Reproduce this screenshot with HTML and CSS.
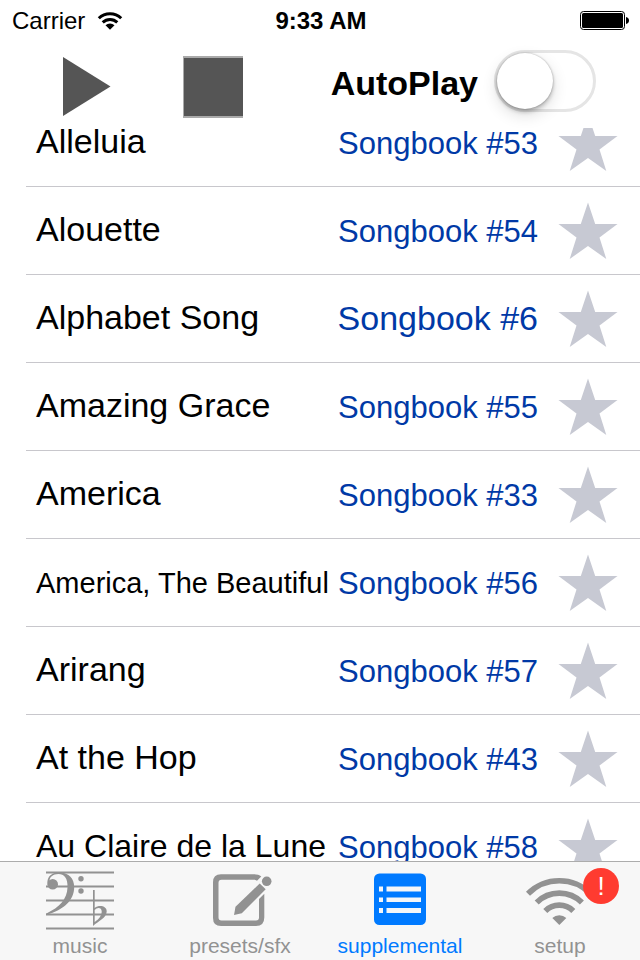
FILE: index.html
```html
<!DOCTYPE html>
<html lang="en">
<head>
<meta charset="utf-8">
<meta name="viewport" content="width=device-width, initial-scale=1">
<title>Supplemental songs</title>
<link rel="stylesheet" href="styles.css">
</head>
<body>
<svg class="defs" aria-hidden="true"><symbol id="star" viewBox="0 0 60 58"><path d="M30 0.500 37.200 22H59.500L41.500 35.500 48.300 57 30 44 11.700 57 18.500 35.500 0.500 22H22.800Z"/></symbol></svg>
<div class="status">
  <div class="carrier"><span>Carrier</span>
    <svg class="signal" viewBox="0 0 26 20" aria-hidden="true"><g fill="none" stroke="#000" stroke-width="3"><path d="M1.800 7.200a16 16 0 0 1 22.400 0"/><path d="M5.700 11.400a10.500 10.500 0 0 1 14.600 0"/></g><path d="M8.500 14.200a6.500 6.500 0 0 1 9 0L13 18.800Z"/></svg>
  </div>
  <time class="clock">9:33 AM</time>
  <svg class="battery" viewBox="0 0 50 20" aria-hidden="true"><rect x="0.500" y="0.500" width="44" height="18" rx="3" fill="none" stroke="#000"/><rect x="2" y="2" width="41" height="15" rx="1.500"/><path d="M46 6c4 .5 4 6.500 0 7Z"/></svg>
</div>
<header class="toolbar">
  <button class="player" type="button" aria-label="Play"><svg viewBox="0 0 60 62"><path d="M0 1 47.500 30.500 0 60Z"/></svg></button>
  <button class="player" type="button" aria-label="Stop"><svg viewBox="0 0 60 62"><path d="M0 0H60V62H0Z" fill="#aaa"/><path d="M1 2H60V60H1Z"/></svg></button>
  <div class="option">
    <label class="autoplay" for="autoplay">AutoPlay</label>
    <input class="switch" id="autoplay" type="checkbox" role="switch">
  </div>
</header>
<main class="list">
  <ul class="songs">
    <li class="song"><span class="title">Alleluia</span><span class="book">Songbook #53</span><button class="star" type="button" aria-label="Favorite"><svg><use href="#star"/></svg></button></li>
    <li class="song"><span class="title">Alouette</span><span class="book">Songbook #54</span><button class="star" type="button" aria-label="Favorite"><svg><use href="#star"/></svg></button></li>
    <li class="song"><span class="title">Alphabet Song</span><span class="book book-large">Songbook #6</span><button class="star" type="button" aria-label="Favorite"><svg><use href="#star"/></svg></button></li>
    <li class="song"><span class="title">Amazing Grace</span><span class="book">Songbook #55</span><button class="star" type="button" aria-label="Favorite"><svg><use href="#star"/></svg></button></li>
    <li class="song"><span class="title">America</span><span class="book">Songbook #33</span><button class="star" type="button" aria-label="Favorite"><svg><use href="#star"/></svg></button></li>
    <li class="song"><span class="title title-small">America, The Beautiful</span><span class="book">Songbook #56</span><button class="star" type="button" aria-label="Favorite"><svg><use href="#star"/></svg></button></li>
    <li class="song"><span class="title">Arirang</span><span class="book">Songbook #57</span><button class="star" type="button" aria-label="Favorite"><svg><use href="#star"/></svg></button></li>
    <li class="song"><span class="title">At the Hop</span><span class="book">Songbook #43</span><button class="star" type="button" aria-label="Favorite"><svg><use href="#star"/></svg></button></li>
    <li class="song"><span class="title title-medium">Au Claire de la Lune</span><span class="book">Songbook #58</span><button class="star" type="button" aria-label="Favorite"><svg><use href="#star"/></svg></button></li>
  </ul>
</main>
<nav class="tabs">
  <a class="tab" href="#music">
    <svg viewBox="0 0 80 64" aria-hidden="true"><path d="M6 6.500H74M6 20.500H74M6 34.500H74M6 48.500H74M6 62.500H74" stroke="currentColor" stroke-width="2"/><circle cx="12.700" cy="18.300" r="5.300"/><path d="M7.500 18C6.500 10 13 6 20 6.300C29 7 34.200 12.500 34.200 21C34.200 34 24 44 6.500 48.700L6 47.700C20 41 27 33 27.500 21.500C28 12 24 8 18.500 8C13 8 9 11 9.500 16Z"/><circle cx="41" cy="12.700" r="2.700"/><circle cx="41" cy="25" r="2.700"/><path fill-rule="evenodd" d="M53 24H54.700V42C59 38.500 67 40 66.700 45.500C66 52.500 59 54.500 53 60ZM54.700 44V56C59 53 61.700 49.500 61.700 45.500C61.700 41 57 41 54.700 44Z"/></svg>
    <span>music</span>
  </a>
  <a class="tab" href="#presets">
    <svg viewBox="0 0 80 64" aria-hidden="true"><path d="M21 8.300H54C57 8.300 59.500 9.200 61.300 10.500L57 14.800C56 14 55 13.800 54 13.800H21.500Q18.500 13.800 18.500 16.800V51.500Q18.500 54.500 21.500 54.500H56Q59 54.500 59 51.500V33L64.300 27.700V51.500Q64.300 60 56 60H21Q13 60 13 52V16.300Q13 8.300 21 8.300Z"/><path d="M34 49 35.500 40.800 59.700 17.500 65.700 23.300 41.800 47.300Z"/><circle cx="66.700" cy="15.300" r="4.800"/></svg>
    <span>presets/sfx</span>
  </a>
  <a class="tab tab-current" href="#supplemental" aria-current="page">
    <svg viewBox="0 0 80 64" aria-hidden="true"><rect x="14" y="7.500" width="52" height="51.500" rx="5.500"/><path d="M19 20.500h4v5h-4zM26.500 20.500H61v5H26.500zM19 31.500h4v4.500h-4zM26.500 31.500H61v4.500H26.500zM19 42h4v5h-4zM26.500 42H61v5H26.500z" fill="#f5f6f8"/></svg>
    <span>supplemental</span>
  </a>
  <a class="tab" href="#setup">
    <svg viewBox="0 0 80 64" aria-hidden="true"><g fill="none" stroke="currentColor" stroke-width="5.700"><path d="M8 27.700A44.300 44.300 0 0 1 70.600 27.700"/><path d="M16.700 36.400A32 32 0 0 1 61.900 36.400"/><path d="M25.300 45A19.800 19.800 0 0 1 53.300 45"/></g><path d="M32.300 52A10 10 0 0 1 46.300 52L39.300 59Z"/></svg>
    <span>setup</span><b class="badge">!</b>
  </a>
</nav>
</body>
</html>
```
FILE: styles.css
```css
* { box-sizing: border-box; }

body {
  margin: 0;
  height: 100vh;
  display: flex;
  flex-direction: column;
  overflow: hidden;
  background: #fff;
  color: #000;
  font-family: "Liberation Sans", Arial, sans-serif;
}

button {
  padding: 0;
  border: 0;
  background: none;
}

svg { display: block; fill: currentColor; }

.defs { position: absolute; width: 0; height: 0; }

.status {
  display: grid;
  grid-template-columns: 1fr auto 1fr;
  align-items: center;
  height: 40px;
  padding: 2px 10px 0 12px;
  font-size: 24px;
  flex: none;
}

.carrier { display: flex; align-items: center; gap: 12px; }
.signal { width: 26px; height: 20px; }
.clock { font-weight: bold; }
.battery { width: 50px; height: 20px; justify-self: end; }

.toolbar {
  display: flex;
  align-items: flex-end;
  height: 88px;
  flex: none;
  padding: 0 44px 10px 63px;
  gap: 60px;
}

.player { width: 60px; height: 62px; color: #555; }
.player svg { width: 60px; height: 62px; }

.option {
  display: flex;
  align-items: center;
  align-self: flex-start;
  gap: 16px;
  margin-left: auto;
  padding-top: 10px;
}

.autoplay {
  padding-top: 4px;
  font-size: 34px;
  font-weight: bold;
}

.switch {
  appearance: none;
  display: flex;
  align-items: center;
  width: 102px;
  height: 62px;
  margin: 0;
  border: 3px solid #e5e5e5;
  border-radius: 31px;
  background: #fff;
}

.switch::before {
  content: "";
  width: 56px;
  height: 56px;
  border-radius: 50%;
  background: #fff;
  box-shadow: 0 6px 16px rgba(0, 0, 0, .14), 0 3px 4px rgba(0, 0, 0, .22), 0 0 2px rgba(0, 0, 0, .3);
}

.switch:checked { background: #4cd964; justify-content: flex-end; }

.list { flex: 1; min-height: 0; overflow: hidden; }

/* The list rests partly scrolled under the toolbar. */
.songs { margin: -29px 0 0; padding: 0; list-style: none; }

.song {
  display: flex;
  align-items: center;
  height: 88px;
  margin-left: 26px;
  padding: 0 22px 0 10px;
  border-bottom: 1px solid #c8c7cc;
  white-space: nowrap;
}

.title { flex: 1; min-width: 0; padding-bottom: 2px; font-size: 34px; }
.title-medium { font-size: 32px; padding-bottom: 0; }
.title-small { font-size: 29px; padding: 2px 0 0; }

.book { padding-top: 2px; color: #0039a6; font-size: 31px; }
.book-large { padding-top: 0; font-size: 34px; }

.star { width: 60px; height: 58px; margin-left: 20px; color: #c7c9d3; }
.star svg { width: 60px; height: 58px; }

.tabs {
  display: grid;
  grid-template-columns: repeat(4, 1fr);
  flex: none;
  height: 99px;
  border-top: 1px solid #acacac;
  background: #f7f7f7;
}

.tab {
  position: relative;
  display: flex;
  flex-direction: column;
  align-items: center;
  gap: 4px;
  padding-top: 4px;
  color: #929292;
  font-size: 21px;
  line-height: 24px;
  text-decoration: none;
}

.tab svg { width: 80px; height: 64px; }
.tab-current { color: #007aff; }

.badge {
  position: absolute;
  top: 6px;
  left: calc(50% + 23px);
  width: 36px;
  height: 36px;
  border-radius: 50%;
  background: #ff3b30;
  color: #fff;
  font-size: 26px;
  font-weight: normal;
  line-height: 36px;
  text-align: center;
}
```
